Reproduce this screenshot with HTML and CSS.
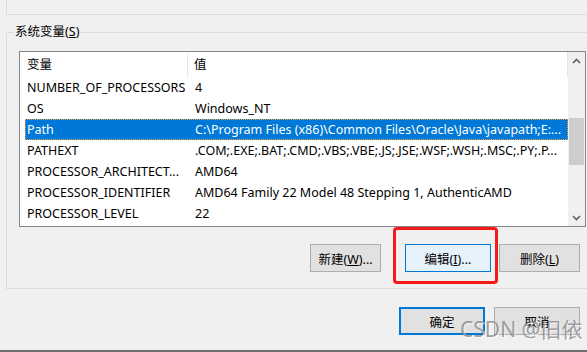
FILE: index.html
```html
<!DOCTYPE html>
<html lang="zh-CN">
<head>
<meta charset="utf-8">
<title>环境变量</title>
<link rel="stylesheet" href="styles.css">
</head>
<body>
<div class="dialog">
  <div class="user-group-tail"></div>

  <section class="group">
    <div class="group-label">系统变量(<u>S</u>)</div>

    <div class="listbox">
      <div class="list-main">
        <div class="list-header">
          <div class="h-name">变量</div>
          <div class="h-val">值</div>
        </div>
        <div class="row"><span class="c-name">NUMBER_OF_PROCESSORS</span><span class="c-val">4</span></div>
        <div class="row"><span class="c-name">OS</span><span class="c-val">Windows_NT</span></div>
        <div class="row selected"><span class="c-name">Path</span><span class="c-val">C:\Program Files (x86)\Common Files\Oracle\Java\javapath;E:...</span></div>
        <div class="row"><span class="c-name">PATHEXT</span><span class="c-val">.COM;.EXE;.BAT;.CMD;.VBS;.VBE;.JS;.JSE;.WSF;.WSH;.MSC;.PY;.P...</span></div>
        <div class="row"><span class="c-name">PROCESSOR_ARCHITECT...</span><span class="c-val">AMD64</span></div>
        <div class="row"><span class="c-name">PROCESSOR_IDENTIFIER</span><span class="c-val">AMD64 Family 22 Model 48 Stepping 1, AuthenticAMD</span></div>
        <div class="row"><span class="c-name">PROCESSOR_LEVEL</span><span class="c-val">22</span></div>
      </div>
      <div class="scrollbar">
        <div class="sb-arrow">
          <svg width="9" height="6" viewBox="0 0 9 6"><path d="M1 5 L4.5 1.5 L8 5" fill="none" stroke="#606060" stroke-width="1.6"/></svg>
        </div>
        <div class="sb-track"><div class="sb-thumb"></div></div>
        <div class="sb-arrow">
          <svg width="9" height="6" viewBox="0 0 9 6"><path d="M1 1 L4.5 4.5 L8 1" fill="none" stroke="#606060" stroke-width="1.6"/></svg>
        </div>
      </div>
    </div>

    <div class="actions">
      <button class="btn btn-new">新建(<u>W</u>)...</button>
      <button class="btn btn-edit">编辑(<u>I</u>)...<span class="highlight"></span></button>
      <button class="btn btn-del">删除(<u>L</u>)</button>
    </div>
  </section>

  <div class="footer">
    <button class="btn btn-ok">确定</button>
    <button class="btn btn-cancel">取消</button>
  </div>

  <div class="watermark">CSDN @旧依</div>
  <div class="bottom-line"></div>
</div>
</body>
</html>
```

FILE: styles.css
```css
* { box-sizing: border-box; }

html, body {
  margin: 0;
  padding: 0;
  background: #f0f0f0;
  overflow: hidden;
}

.dialog {
  position: relative;
  width: 587px;
  height: 352px;
  display: flex;
  flex-direction: column;
  font-family: "Noto Sans", "Noto Sans CJK SC", sans-serif;
  font-size: 12.5px;
  color: #000;
}

u { text-decoration: underline; text-underline-offset: 1px; }

.user-group-tail {
  margin-left: 6px;
  height: 15px;
  border-left: 1px solid #dcdcdc;
  border-bottom: 1px solid #dcdcdc;
}

.group {
  position: relative;
  margin-top: 17px;
  margin-left: 6px;
  border: 1px solid #dcdcdc;
  border-right: none;
  padding: 18px 0 16px 12px;
}

.group-label {
  position: absolute;
  top: -9px;
  left: 7px;
  padding: 0 1px;
  background: #f0f0f0;
  line-height: 16px;
}

.listbox {
  width: 567px;
  height: 176px;
  border: 1px solid #828790;
  background: #fff;
  display: flex;
}

.list-main {
  width: 548px;
  display: flex;
  flex-direction: column;
}

.list-header {
  height: 25px;
  display: flex;
  align-items: center;
  border-right: 1px solid #e5e5e5;
}

.h-name {
  width: 168px;
  padding-left: 7px;
  height: 24px;
  line-height: 24px;
  border-right: 1px solid #e5e5e5;
}

.h-val {
  padding-left: 6px;
  line-height: 24px;
}

.row {
  margin-left: 5px;
  height: 21px;
  line-height: 21px;
  display: grid;
  grid-template-columns: 163px 1fr;
  white-space: nowrap;
  overflow: hidden;
}

.c-name { padding-left: 2px; overflow: hidden; }
.c-val { padding-left: 7px; overflow: hidden; }

.row.selected {
  background: #0078d7;
  color: #fff;
  outline: 1px dotted #f0a040;
  outline-offset: -1px;
}

.scrollbar {
  width: 17px;
  background: #f0f0f0;
  display: flex;
  flex-direction: column;
}

.sb-arrow {
  height: 17px;
  display: flex;
  align-items: center;
  justify-content: center;
}

.sb-track {
  flex: 1;
  padding: 49px 1px 0;
}

.sb-thumb {
  height: 47px;
  background: #cdcdcd;
}

.actions {
  margin-top: 17px;
  display: flex;
}

.btn {
  position: relative;
  height: 28px;
  padding: 0;
  border: 1px solid #adadad;
  background: #e1e1e1;
  font-family: inherit;
  font-size: 12.5px;
  color: #000;
}

.btn-new { margin-left: 291px; width: 71px; }
.btn-edit {
  margin-left: 24px;
  width: 86px;
  border-color: #0078d7;
  background: #e5f1fb;
}
.btn-del { margin-left: 8px; width: 81px; }

.highlight {
  position: absolute;
  left: -13px;
  top: -18px;
  width: 105px;
  height: 57px;
  border: 3px solid #f51a1a;
  border-radius: 4px;
}

.footer {
  margin-top: 18px;
  display: flex;
  padding-left: 399px;
}

.btn-ok {
  width: 86px;
  border: 2px solid #0078d7;
}

.btn-cancel {
  width: 86px;
  margin-left: 9px;
}

.watermark {
  position: absolute;
  left: 460px;
  top: 315px;
  font-size: 21px;
  line-height: 28px;
  color: rgba(110, 110, 110, 0.65);
  text-shadow: 1px 1px 0 rgba(255, 255, 255, 0.7);
  white-space: nowrap;
}

.bottom-line {
  margin-top: auto;
  height: 2px;
  background: #6d6d6d;
}
```
